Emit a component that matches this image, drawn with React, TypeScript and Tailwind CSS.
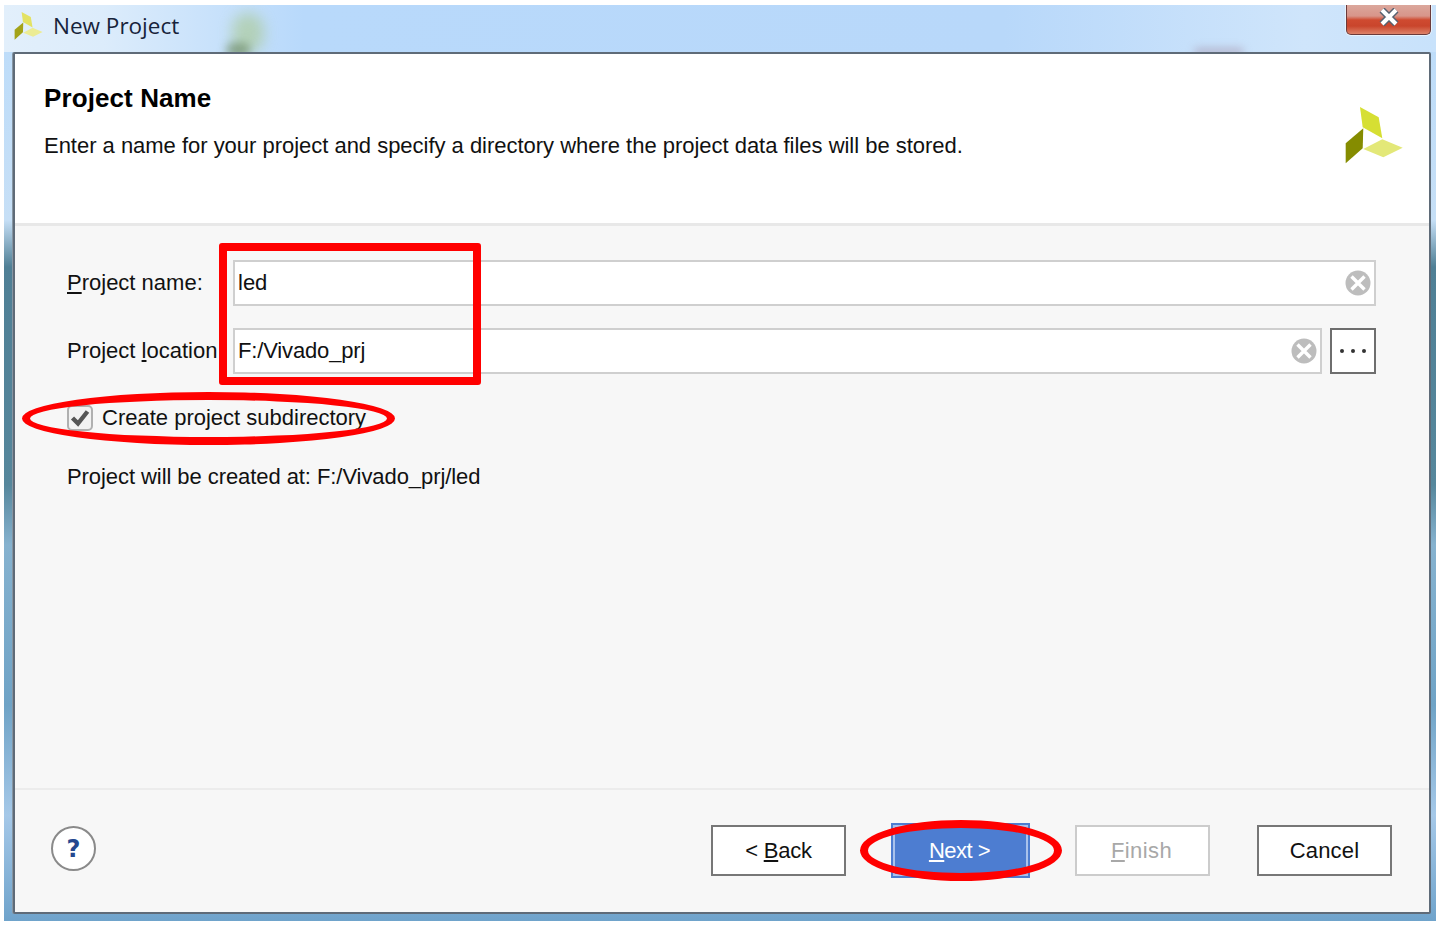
const font = "font-['Liberation_Sans',Arial,sans-serif]"

function Logo({ className, pale }: { className: string; pale?: boolean }) {
    return (
        <svg viewBox="0 0 58 57" className={className}>
            <polygon points="15,0 33.7,10.3 37.3,31.3 17.7,20.3" fill={pale ? "#e3e263" : "#d6df33"} />
            <polygon points="18.3,21.3 17.7,41.3 0.7,56.3 0.7,36.3" fill={pale ? "#a3a318" : "#858c00"} />
            <polygon points="18.3,42 37.3,32.3 57.7,40.7 38.3,50.3" fill={pale ? "#ecec94" : "#e3e878"} />
        </svg>
    )
}

function ClearIcon() {
    return (
        <svg viewBox="0 0 26 26" className="w-[26px] h-[26px] shrink-0">
            <circle cx="13" cy="13" r="12.5" fill="#bdbdbd" />
            <path d="M6.5 6.5 L19.5 19.5 M19.5 6.5 L6.5 19.5" stroke="#ffffff" strokeWidth="3.4" />
        </svg>
    )
}

function WizardButton({ children, className }: { children: React.ReactNode; className: string }) {
    return (
        <div className={`flex items-center justify-center text-[22px] ${className}`}>
            {children}
        </div>
    )
}

export default function App() {
    return (
        <div className={`w-[1442px] h-[926px] bg-white pt-[5px] pl-[4px] overflow-hidden text-[#111111] ${font}`}>
            <div className="relative w-[1432px] h-[916px] flex flex-col overflow-hidden bg-[linear-gradient(180deg,#bcdcfa_0px,#c6dff6_215px,#4f7f95_262px,#56879c_480px,#86b2cf_540px,#6fa3c6_700px,#a5c8e8_810px,#6fa3cb_916px)]">
                {/* Title bar */}
                <div className="relative h-[47px] shrink-0 flex items-start overflow-hidden bg-[linear-gradient(90deg,#e2effb_0px,#dcecfb_100px,#b8d9fb_300px,#b8d8fa_1000px,#cfe5fb_1300px,#c8e2fb_1432px)]">
                    <div className="absolute left-[228px] top-[8px] w-[32px] h-[40px] rounded-full bg-[#a9c88e] blur-[7px] opacity-60" />
                    <div className="absolute left-[222px] top-[38px] w-[24px] h-[14px] rounded-full bg-[#5f7d48] blur-[5px] opacity-60" />
                    <div className="absolute left-[1190px] top-[43px] w-[50px] h-[8px] rounded-full bg-[#a08aa0] blur-[4px] opacity-50" />
                    <Logo className="relative w-[29px] h-[28px] ml-[10px] mt-[7px]" pale />
                    <span className="relative ml-[10px] mt-[4px] text-[22.5px] leading-[34px] text-[#17233a] font-['Open_Sans',sans-serif]">New Project</span>
                    <div className="absolute right-[5px] top-0 w-[85px] h-[30px] rounded-b-[5px] border border-t-0 border-[#6b3a3a] bg-[linear-gradient(180deg,#dba79c_0px,#d8958a_11px,#cf4a30_15px,#c9452c_21px,#e08a70_30px)] flex items-start justify-center pt-[3px] shadow-[0_0_0_1px_#e8f2fb]">
                        <svg viewBox="0 0 22 18" className="w-[22px] h-[18px]">
                            <path d="M4 2 L18 16 M18 2 L4 16" stroke="#55606f" strokeWidth="7" />
                            <path d="M4 2 L18 16 M18 2 L4 16" stroke="#ffffff" strokeWidth="4" />
                        </svg>
                    </div>
                </div>

                {/* Dialog body */}
                <div className="ml-[9px] w-[1418px] h-[862px] shrink-0 flex flex-col border-2 border-[#5f6b78] rounded-[2px] bg-[#f7f7f7] shadow-[-1px_0_0_#8796a3]">
                    <div className="h-[169px] shrink-0 flex justify-between bg-white border-b-[3px] border-[#e8e8e8] box-content">
                        <div className="pl-[29px] pt-[27px]">
                            <h1 className="text-[26px] leading-[34px] font-bold tracking-[0.1px] text-black">Project Name</h1>
                            <p className="mt-[16px] text-[22px] leading-[30px] tracking-[-0.02px]">Enter a name for your project and specify a directory where the project data files will be stored.</p>
                        </div>
                        <Logo className="w-[58px] h-[57px] mt-[53px] mr-[26px]" />
                    </div>

                    <div className="flex-1 pl-[52px] pr-[53px] pt-[34px] text-[22px]">
                        <div className="flex items-center h-[46px]">
                            <label className="w-[166px] shrink-0 pb-[2px]"><span className="underline underline-offset-2">P</span>roject name:</label>
                            <div className="flex-1 h-[46px] flex items-center justify-between bg-white border-2 border-[#cfcfcf] pl-[3px] pr-[3px]">
                                <span className="pb-[2px]">led</span>
                                <ClearIcon />
                            </div>
                        </div>
                        <div className="flex items-center h-[46px] mt-[22px]">
                            <label className="w-[166px] shrink-0 whitespace-nowrap pb-[2px]">Project <span className="underline underline-offset-2">l</span>ocation</label>
                            <div className="flex-1 h-[46px] flex items-center justify-between bg-white border-2 border-[#cfcfcf] pl-[3px] pr-[3px]">
                                <span className="tracking-[-0.15px] pb-[2px]">F:/Vivado_prj</span>
                                <ClearIcon />
                            </div>
                            <div className="w-[46px] h-[46px] ml-[8px] flex items-center justify-center gap-[7px] bg-white border-2 border-[#6e6e6e]">
                                <span className="w-[4px] h-[4px] rounded-full bg-[#333333]" />
                                <span className="w-[4px] h-[4px] rounded-full bg-[#333333]" />
                                <span className="w-[4px] h-[4px] rounded-full bg-[#333333]" />
                            </div>
                        </div>
                        <div className="flex items-center h-[30px] mt-[29px]">
                            <div className="w-[26px] h-[26px] flex items-center justify-center bg-[#f2f2f2] border-2 border-[#b0b0b0] rounded-[5px]">
                                <svg viewBox="0 0 20 20" className="w-[20px] h-[20px]">
                                    <path d="M2.5 10 L8 15.5 L17.5 3.5" fill="none" stroke="#555555" strokeWidth="4.4" />
                                </svg>
                            </div>
                            <span className="ml-[9px] pb-[2px]">Create project subdirectory</span>
                        </div>
                        <p className="mt-[29px] leading-[30px] tracking-[-0.07px]">Project will be created at: F:/Vivado_prj/led</p>
                    </div>

                    <div className="h-[124px] shrink-0 flex items-center border-t-2 border-[#ececec] pl-[36px] pr-[37px]">
                        <div className="w-[45px] h-[45px] mt-[-6px] pt-[2px] flex items-center justify-center rounded-full bg-white border-2 border-[#8a8a8a] text-[#24478f] text-[24px] font-bold font-['DejaVu_Sans',sans-serif]">?</div>
                        <div className="ml-auto flex items-center mt-[-2px]">
                            <WizardButton className="w-[135px] h-[51px] bg-white border-2 border-[#777777] tracking-[-0.2px]">
                                <span>&lt; <span className="underline underline-offset-2">B</span>ack</span>
                            </WizardButton>
                            <WizardButton className="w-[139px] h-[55px] ml-[45px] bg-[#4d7dd1] border-2 border-[#4d7dd1] outline-2 outline-offset-[-4px] outline-[#a9c2ec] text-white tracking-[-0.5px] pr-[2px]">
                                <span><span className="underline underline-offset-2">N</span>ext &gt;</span>
                            </WizardButton>
                            <WizardButton className="w-[135px] h-[51px] ml-[45px] bg-white border-2 border-[#cccccc] text-[#a8a8a8] tracking-[0.4px] pr-[2px]">
                                <span><span className="underline underline-offset-2">F</span>inish</span>
                            </WizardButton>
                            <WizardButton className="w-[135px] h-[51px] ml-[47px] bg-white border-2 border-[#777777] tracking-[0.2px]">
                                <span>Cancel</span>
                            </WizardButton>
                        </div>
                    </div>
                </div>

                {/* Red annotations over the dialog */}
                <div className="absolute left-[215px] top-[238px] w-[262px] h-[142px] border-[8px] border-[#ff0000] rounded-[3px]" />
                <div className="absolute left-[18px] top-[387px] w-[373px] h-[53px] border-[8px] border-[#ff0000] rounded-[50%]" />
                <div className="absolute left-[856px] top-[815px] w-[202px] h-[61px] border-[8px] border-[#ff0000] rounded-[50%]" />
            </div>
        </div>
    )
}
